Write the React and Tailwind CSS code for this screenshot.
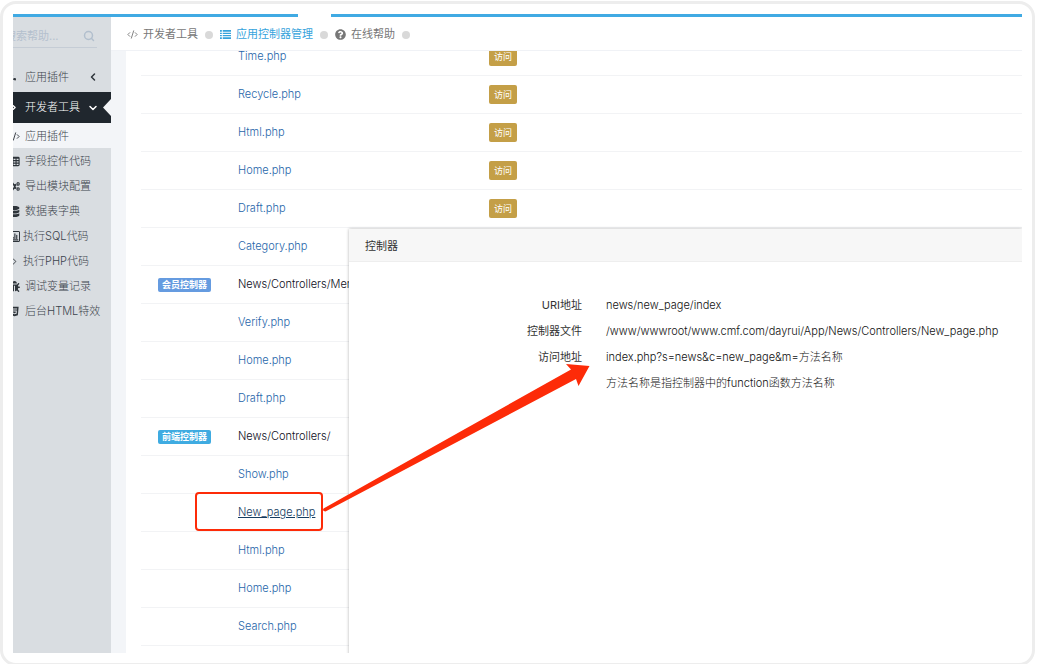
// src/pages/Controllers.jsx
import React from "react";
import { ChartColumn, ChevronDown, ChevronLeft, ChevronRight, CodeXml, Search } from "lucide-react";
import {
  FaBug, FaCogs, FaDatabase, FaHtml5, FaPuzzlePiece, FaQuestionCircle
} from "react-icons/fa";

const TABS = [
  { label: "开发者工具", icon: CodeXml },
  { label: "应用控制器管理", icon: ListIcon, active: true },
  { label: "在线帮助", icon: FaQuestionCircle }
];

const MENU = [
  { label: "应用插件", icon: CodeXml, active: true },
  { label: "字段控件代码", icon: TableIcon },
  { label: "导出模块配置", icon: FaCogs },
  { label: "数据表字典", icon: FaDatabase },
  { label: "执行SQL代码", icon: ReportIcon, tight: true },
  { label: "执行PHP代码", icon: ChevronRight, tight: true },
  { label: "调试变量记录", icon: FaBug },
  { label: "后台HTML特效", icon: FaHtml5 }
];

const ROWS = [
  { file: "Time.php", visit: true },
  { file: "Recycle.php", visit: true },
  { file: "Html.php", visit: true },
  { file: "Home.php", visit: true },
  { file: "Draft.php", visit: true },
  { file: "Category.php", visit: true },
  { group: "会员控制器", color: "bg-[#659be0]", path: "News/Controllers/Member/" },
  { file: "Verify.php" },
  { file: "Home.php" },
  { file: "Draft.php" },
  { group: "前端控制器", color: "bg-[#3fabe1]", path: "News/Controllers/" },
  { file: "Show.php" },
  { file: "New_page.php", current: true },
  { file: "Html.php" },
  { file: "Home.php" },
  { file: "Search.php" },
  { file: "" }
];

const DETAILS = [
  { label: "URI地址", value: "news/new_page/index" },
  { label: "控制器文件", value: "/www/wwwroot/www.cmf.com/dayrui/App/News/Controllers/New_page.php" },
  { label: "访问地址", value: "index.php?s=news&c=new_page&m=方法名称" },
  { label: "", value: "方法名称是指控制器中的function函数方法名称" }
];

export default function App() {
  return (
    <div className="h-screen overflow-hidden bg-white pt-px pr-[7px] font-[Inter,'Noto_Sans_CJK_SC',sans-serif] text-[11px]">
      <div className="h-[calc(100%+2px)] rounded-2xl border-3 border-[#ededed] p-[10px]">
        <div className="relative flex h-full flex-col overflow-hidden">
          {/* top nav edge, open under the selected item */}
          <div className="flex h-[3px] shrink-0 gap-[33px]">
            <div className="w-[285px] bg-[#40aae3]" />
            <div className="flex-1 bg-[#40aae3]" />
          </div>

          <div className="flex min-h-0 flex-1">
            <Sidebar />
            <main className="flex min-w-0 flex-1 flex-col">
              <Tabs />
              <div className="min-h-0 flex-1 overflow-hidden border-l-[15px] border-[#f3f5f8] pl-[15px]">
                <FileTable />
              </div>
            </main>
          </div>

          <Dialog />
          <Marks />
        </div>
      </div>
    </div>
  );
}

function Sidebar() {
  return (
    <aside className="w-[98px] shrink-0 overflow-hidden bg-[#d9dde1] font-light text-[#3c444c]">
      <div className="-ml-2">
        <label className="mr-[14px] flex h-[31px] items-center border-b border-[#c5ccd5] pt-2">
          <input
            type="text"
            aria-label="搜索帮助"
            placeholder="搜索帮助..."
            className="w-full min-w-0 bg-transparent font-normal outline-none placeholder:text-[#b4c0ce]"
          />
          <Search className="mr-[2px] size-3 shrink-0 text-[#b2bfcd]" strokeWidth={3} />
        </label>

        <a href="#" className="mt-[14px] flex h-[30px] items-center pr-3">
          <FaPuzzlePiece className="mr-[9px] size-[11px] shrink-0 text-[#2f353b]" />
          <span className="flex-1 whitespace-nowrap">应用插件</span>
          <ChevronLeft className="size-3 text-[#2f353b]" strokeWidth={3} />
        </a>
        <a href="#" className="relative flex h-[31px] items-center bg-[#20272e] pr-3 text-white">
          <CodeXml className="mr-[9px] size-[11px] shrink-0" strokeWidth={3} />
          <span className="flex-1 whitespace-nowrap">开发者工具</span>
          <ChevronDown className="size-3" strokeWidth={3} />
          <svg className="absolute top-[7px] right-0" width="8" height="17" viewBox="0 0 8 17">
            <path d="M8 0v17L0 8.500z" fill="#f3f5f8" />
          </svg>
        </a>

        <ul>
          {MENU.map(m => (
            <li key={m.label} className={m.active ? "bg-[#f3f5f8]" : ""}>
              <a href="#" className={`flex h-[25px] items-center pt-[2px] whitespace-nowrap ${m.tight ? "gap-[3px] pl-1" : "gap-[5px] pl-1"}`}>
                <m.icon className="size-[11px] shrink-0 text-[#2f353b]" />
                {m.label}
              </a>
            </li>
          ))}
        </ul>
      </div>
    </aside>
  );
}

function Tabs() {
  return (
    <nav className="flex h-[34px] shrink-0 items-center gap-[7px] border-b border-[#f0f2f6] pt-[2px] pl-4">
      {TABS.map(t => (
        <React.Fragment key={t.label}>
          <a href="#" className={`flex items-center gap-[5px] ${t.active ? "text-[#36a3dc]" : "text-[#777777]"}`}>
            <t.icon className="size-[11px]" />
            {t.label}
          </a>
          <i className="size-2 rounded-full bg-[#d9d9d9]" />
        </React.Fragment>
      ))}
    </nav>
  );
}

function FileTable() {
  return (
    <table className="-mt-[14px] w-full table-fixed border-collapse font-light">
      <colgroup>
        <col className="w-[92px]" />
        <col className="w-[251px]" />
        <col />
      </colgroup>
      <tbody>
        {ROWS.map((r, i) => (
          <tr key={i} className="h-[38px] border-b border-[#f2f3f5]">
            <td className="pt-px pl-[17px]">
              {r.group && (
                <span className={`block w-[53px] rounded-[2px] text-center text-[9px] leading-[14px] font-bold text-white ${r.color}`}>
                  {r.group}
                </span>
              )}
            </td>
            <td className="pt-px pl-[5px] whitespace-nowrap text-[#0c0c20]">
              {r.path || (
                <a href="#" className={r.current ? "text-[#153c60] underline" : "text-[#1f66aa]"}>{r.file}</a>
              )}
            </td>
            <td className="pt-px pl-[5px]">
              {r.visit && (
                <button type="button" className="block h-[19px] w-7 rounded-[2px] bg-[#c49f47] text-[9px] font-normal text-white">访问</button>
              )}
            </td>
          </tr>
        ))}
      </tbody>
    </table>
  );
}

function Dialog() {
  return (
    <section className="absolute top-[215px] right-0 -bottom-1 left-[336px] bg-white shadow-[0_0_3px_rgba(0,0,0,0.3)]">
      <h2 className="flex h-[33px] items-center border-b border-[#eeeeee] bg-[#f7f7f7] pt-[2px] pl-4 text-[#333333]">控制器</h2>
      <dl className="pt-[30px] leading-[26px] text-[#333333]">
        {DETAILS.map(d => (
          <div key={d.value} className="flex gap-6">
            <dt className="w-[233px] shrink-0 text-right">{d.label}</dt>
            <dd className="font-light whitespace-nowrap text-[#111111]">{d.value}</dd>
          </div>
        ))}
      </dl>
    </section>
  );
}

function ListIcon({ className }) {
  return (
    <svg className={className} viewBox="0 0 12 12" fill="currentColor">
      <path d="M0 1h2v2H0zM3 1h9v2H3zM0 4h2v1.500H0zM3 4h9v1.500H3zM0 6.500h2V8H0zM3 6.500h9V8H3zM0 9h2v2H0zM3 9h9v2H3z" />
    </svg>
  );
}

function TableIcon({ className }) {
  return (
    <svg className={className} viewBox="0 0 12 12" fill="none" stroke="currentColor" strokeWidth="1.2">
      <rect x="1" y="1.500" width="10" height="9" rx="1" />
      <path d="M1 2.500h10M1 5h10M1 7.800h10M4.300 2v8.500M7.700 2v8.500" />
    </svg>
  );
}

function ReportIcon({ className }) {
  return (
    <span className={`relative rounded-[1px] border border-current ${className}`}>
      <ChartColumn className="size-full" strokeWidth={3} />
    </span>
  );
}

// red frame round New_page.php and the arrow to its address
function Marks() {
  return (
    <svg className="pointer-events-none absolute top-0 left-0" width="600" height="530" viewBox="13 14 600 530" fill="#fd2b08">
      <rect x="196" y="493" width="126" height="37" rx="3" fill="none" stroke="#fd2b08" strokeWidth="2" />
      <path d="M323.500 508.500L440 443L571 369.500L566 364L589.500 366L578.500 386L576 379L440 451L325.500 511.500Q322 511.500 323.500 508.500Z" />
    </svg>
  );
}
